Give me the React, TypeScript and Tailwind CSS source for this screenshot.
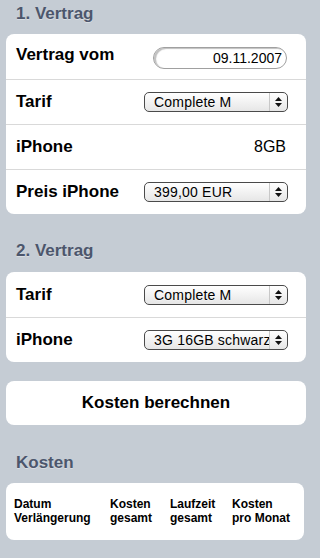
import React from "react";

const font = { fontFamily: '"Liberation Sans", Arial, sans-serif' };

function Select({ value }: { value: string }) {
  return (
    <div className="ml-auto mr-[18px] flex h-[20px] w-[144px] items-stretch overflow-hidden rounded-[5px] border border-[#4a4a4a] bg-gradient-to-b from-white to-[#e6e6e6] shadow-[0_1px_0_rgba(255,255,255,0.6)]">
      <div className="flex-1 overflow-hidden whitespace-nowrap pl-[9px] text-[14px] leading-[18px] tracking-[0.2px] text-black">
        {value}
      </div>
      <div className="flex w-[18px] flex-col items-center justify-center gap-[2px] border-l border-[#c8c8c8]">
        <svg width="7" height="4" viewBox="0 0 7 4">
          <path d="M0 4 L3.5 0 L7 4 Z" fill="#111" />
        </svg>
        <svg width="7" height="4" viewBox="0 0 7 4">
          <path d="M0 0 L3.5 4 L7 0 Z" fill="#111" />
        </svg>
      </div>
    </div>
  );
}

function Row({
  label,
  children,
  first,
  labelClass,
}: {
  label: string;
  children?: React.ReactNode;
  first?: boolean;
  labelClass?: string;
}) {
  return (
    <div
      className={`flex h-[45px] items-center ${first ? "" : "border-t border-[#d9d9d9]"}`}
    >
      <div
        className={`pl-[10px] text-[17px] font-bold leading-[20px] text-black ${labelClass ?? ""}`}
      >
        {label}
      </div>
      {children}
    </div>
  );
}

function Header({ text, className }: { text: string; className?: string }) {
  return (
    <div
      className={`pl-[16px] text-[17px] font-bold leading-[20px] text-[#4c566c] ${className ?? ""}`}
    >
      {text}
    </div>
  );
}

export default function App() {
  return (
    <div
      style={font}
      className="h-[558px] w-[320px] overflow-hidden bg-[#c5ccd4] pt-[4px] [text-shadow:0_1px_0_rgba(255,255,255,0.35)]"
    >
      <Header text="1. Vertrag" />
      <div className="mx-[6px] mt-[10px] w-[300px] rounded-[8px] bg-white">
        <Row label="Vertrag vom" first labelClass="-mt-[4px]">
          <div className="ml-auto mr-[19px] mt-[3px] flex h-[22px] w-[134px] items-center justify-end rounded-full border border-[#a0a0a0] bg-white pr-[4px] text-[14px] text-black shadow-[inset_2px_1px_1px_rgba(0,0,0,0.25)]">
            09.11.2007
          </div>
        </Row>
        <Row label="Tarif">
          <Select value="Complete M" />
        </Row>
        <Row label="iPhone">
          <div className="ml-auto mr-[20px] text-[16px] leading-[20px] text-black">
            8GB
          </div>
        </Row>
        <Row label="Preis iPhone">
          <Select value="399,00 EUR" />
        </Row>
      </div>

      <Header text="2. Vertrag" className="mt-[27px]" />
      <div className="mx-[6px] mt-[11px] w-[300px] rounded-[8px] bg-white">
        <Row label="Tarif" first>
          <Select value="Complete M" />
        </Row>
        <Row label="iPhone">
          <Select value="3G 16GB schwarz" />
        </Row>
      </div>

      <div className="mx-[6px] mt-[19px] flex h-[44px] w-[300px] items-center justify-center rounded-[8px] bg-white text-[17px] font-bold text-black">
        Kosten berechnen
      </div>

      <Header text="Kosten" className="mt-[28px]" />
      <div className="mx-[6px] mt-[10px] grid h-[57px] w-[298px] grid-cols-[96px_60px_62px_auto] rounded-[8px] bg-white pl-[8px] pt-[14px] text-[12px] font-bold leading-[14px] text-black">
        <div>
          Datum
          <br />
          Verlängerung
        </div>
        <div>
          Kosten
          <br />
          gesamt
        </div>
        <div>
          Laufzeit
          <br />
          gesamt
        </div>
        <div>
          Kosten
          <br />
          pro Monat
        </div>
      </div>
    </div>
  );
}
